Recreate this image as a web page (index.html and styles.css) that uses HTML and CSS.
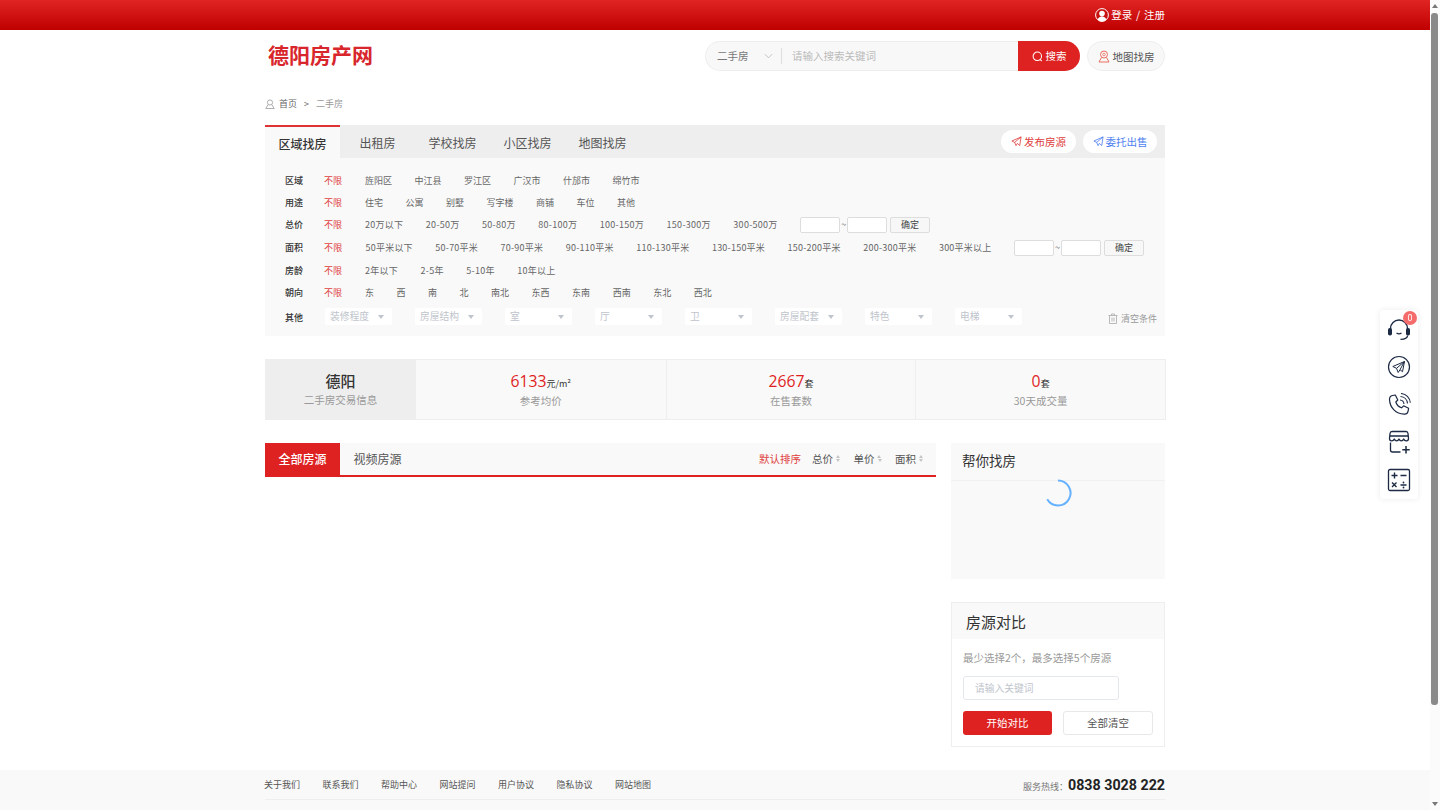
FILE: index.html
```html
<!DOCTYPE html>
<html lang="zh-CN">
<head>
  <meta charset="UTF-8">
  <title>德阳房产网 - 二手房</title>
  <link rel="stylesheet" href="styles.css">
</head>
<body>
  <!-- top bar -->
  <div class="topbar">
    <div class="wrap topbar-in">
      <svg class="user-icon" viewBox="0 0 14 14"><circle cx="7" cy="7" r="6.4" fill="#c8100f" stroke="#fff" stroke-width="1"/><circle cx="7" cy="5.6" r="2.8" fill="#fff"/><path d="M2.6 11.6c.8-2.4 2.4-3.2 4.4-3.2s3.6.8 4.4 3.2A6 6 0 0 1 2.6 11.6z" fill="#fff"/></svg>
      <a class="login">登录 / 注册</a>
    </div>
  </div>

  <!-- logo and search -->
  <div class="wrap header">
    <div class="logo">德阳房产网</div>
    <div class="search">
      <div class="search-type">二手房
        <svg class="chev" viewBox="0 0 10 6"><path d="M1 1l4 4 4-4" fill="none" stroke="#bbb" stroke-width="1"/></svg>
      </div>
      <div class="search-input">请输入搜索关键词</div>
      <div class="search-btn">
        <svg class="ico10" viewBox="0 0 12 12"><circle cx="5.8" cy="5.8" r="4.6" fill="none" stroke="#fff" stroke-width="1.1"/><path d="M8.8 9.2l1.8 1.8" stroke="#fff" stroke-width="1.1"/></svg>
        搜索
      </div>
    </div>
    <div class="map-btn">
      <svg class="pin" viewBox="0 0 12 13"><circle cx="6" cy="4.5" r="3.5" fill="none" stroke="#e9705f" stroke-width="1"/><circle cx="6" cy="4.5" r="1.3" fill="none" stroke="#e9705f" stroke-width=".8"/><path d="M3.5 7.5L1 12h10L8.5 7.5" fill="none" stroke="#e9705f" stroke-width="1"/></svg>
      地图找房
    </div>
  </div>

  <div class="wrap crumb">
    <svg class="crumb-ico" viewBox="0 0 10 10"><circle cx="5" cy="3.5" r="2.6" fill="none" stroke="#999" stroke-width=".8"/><path d="M3 5.8L.8 9.5h8.4L7 5.8" fill="none" stroke="#999" stroke-width=".8"/></svg>
    <a>首页</a><span class="crumb-sep">&gt;</span><span class="crumb-now">二手房</span>
  </div>

  <!-- filter panel -->
  <div class="wrap panel">
    <div class="tabs">
      <a class="tab active">区域找房</a>
      <a class="tab">出租房</a>
      <a class="tab">学校找房</a>
      <a class="tab">小区找房</a>
      <a class="tab">地图找房</a>
      <div class="tab-btns">
        <a class="pill pill-red"><svg class="plane" viewBox="0 0 12 12"><path d="M11 1L1 5.5l3 1.5 1.5 3.5L7 8M11 1L4 7M11 1L9.5 10.5 7 8" fill="none" stroke="currentColor" stroke-width=".9"/></svg>发布房源</a>
        <a class="pill pill-blue"><svg class="plane" viewBox="0 0 12 12"><path d="M11 1L1 5.5l3 1.5 1.5 3.5L7 8M11 1L4 7M11 1L9.5 10.5 7 8" fill="none" stroke="currentColor" stroke-width=".9"/></svg>委托出售</a>
      </div>
    </div>
    <div class="filters">
      <div class="row"><b>区域</b><a class="on">不限</a><a>旌阳区</a><a>中江县</a><a>罗江区</a><a>广汉市</a><a>什邡市</a><a>绵竹市</a></div>
      <div class="row"><b>用途</b><a class="on">不限</a><a>住宅</a><a>公寓</a><a>别墅</a><a>写字楼</a><a>商铺</a><a>车位</a><a>其他</a></div>
      <div class="row row-tall"><b>总价</b><a class="on">不限</a><a>20万以下</a><a>20-50万</a><a>50-80万</a><a>80-100万</a><a>100-150万</a><a>150-300万</a><a>300-500万</a>
        <div class="range"><input><i>~</i><input><button>确定</button></div>
      </div>
      <div class="row row-tall row-area"><b>面积</b><a class="on">不限</a><a>50平米以下</a><a>50-70平米</a><a>70-90平米</a><a>90-110平米</a><a>110-130平米</a><a>130-150平米</a><a>150-200平米</a><a>200-300平米</a><a>300平米以上</a>
        <div class="range"><input><i>~</i><input><button>确定</button></div>
      </div>
      <div class="row row-num"><b>房龄</b><a class="on">不限</a><a>2年以下</a><a>2-5年</a><a>5-10年</a><a>10年以上</a></div>
      <div class="row"><b>朝向</b><a class="on">不限</a><a>东</a><a>西</a><a>南</a><a>北</a><a>南北</a><a>东西</a><a>东南</a><a>西南</a><a>东北</a><a>西北</a></div>
      <div class="row row-other"><b>其他</b>
        <div class="selects">
          <div class="sel">装修程度</div><div class="sel">房屋结构</div><div class="sel">室</div><div class="sel">厅</div><div class="sel">卫</div><div class="sel">房屋配套</div><div class="sel">特色</div><div class="sel">电梯</div>
        </div>
        <a class="clear"><svg class="trash" viewBox="0 0 10 11"><path d="M.5 2.5h9M3.5 2.5V1h3v1.5M1.5 2.5V10.5h7V2.5M4 4.5v4M6 4.5v4" fill="none" stroke="#aaa" stroke-width=".8"/></svg>清空条件</a>
      </div>
    </div>
  </div>

  <!-- stats -->
  <div class="stats">
    <div class="stat-city"><strong>德阳</strong><span>二手房交易信息</span></div>
    <div class="stat"><p><em>6133</em>元/m²</p><span>参考均价</span></div>
    <div class="stat"><p><em>2667</em>套</p><span>在售套数</span></div>
    <div class="stat"><p><em>0</em>套</p><span>30天成交量</span></div>
  </div>

  <!-- list and side column -->
  <div class="wrap content">
    <div class="list">
      <div class="list-head">
        <a class="list-tab active">全部房源</a>
        <a class="list-tab">视频房源</a>
        <div class="sort">
          <a class="on">默认排序</a>
          <a>总价<i class="updown"></i></a>
          <a>单价<i class="updown"></i></a>
          <a>面积<i class="updown"></i></a>
        </div>
      </div>
    </div>
    <div class="side">
      <div class="help">
        <div class="help-title">帮你找房</div>
        <div class="spinner-box"><svg class="spinner" viewBox="0 0 28 28"><path d="M14 1.5A12.5 12.5 0 1 1 3.2 20.3" fill="none" stroke="#66b1ff" stroke-width="2"/></svg></div>
      </div>
      <div class="compare">
        <div class="compare-title">房源对比</div>
        <div class="compare-body">
          <p>最少选择2个，最多选择5个房源</p>
          <div class="compare-input">请输入关键词</div>
          <div class="compare-btns"><a class="btn-red">开始对比</a><a class="btn-white">全部清空</a></div>
        </div>
      </div>
    </div>
  </div>

  <!-- footer -->
  <div class="footer">
    <div class="wrap">
      <div class="foot-top">
        <div class="foot-links"><a>关于我们</a><a>联系我们</a><a>帮助中心</a><a>网站提问</a><a>用户协议</a><a>隐私协议</a><a>网站地图</a></div>
        <div class="hotline">服务热线：<b>0838 3028 222</b></div>
      </div>
    </div>
  </div>

  <!-- floating tools -->
  <div class="rail">
    <div class="rail-item">
      <span class="badge">0</span>
      <svg viewBox="0 0 24 24"><path d="M3.5 13V10.5a8.5 8.5 0 0 1 17 0V13" fill="none" stroke="#1d2a44" stroke-width="1.4"/><rect x="1" y="10" width="4" height="7.5" rx="1.8" fill="#1d2a44"/><rect x="19" y="10" width="4" height="7.5" rx="1.8" fill="#1d2a44"/><path d="M9.5 15c1.5 1 3.5 1 5 0M20.5 17.5c0 2.5-3.500 3.800-7 3.800" fill="none" stroke="#1d2a44" stroke-width="1.3"/></svg>
    </div>
    <div class="rail-item">
      <svg viewBox="0 0 24 24"><circle cx="12" cy="12" r="10.5" fill="none" stroke="#1d2a44" stroke-width="1.2"/><path d="M17.5 6.5L5.8 11.5l3.7 1.8 1.7 4.2 1.8-2.800zM17.5 6.5L9.5 13.3M17.5 6.5l-2 10.2-2.5-2" fill="none" stroke="#1d2a44" stroke-width="1" stroke-linejoin="round"/></svg>
    </div>
    <div class="rail-item">
      <svg viewBox="0 0 24 24"><path d="M5.5 2.5L8.3 2l2.500 5-2 2c.8 2.500 3.300 5 5.800 5.800l2-2 5 2.500-.5 2.800c-.4 2-2.200 3.200-4.100 3C9 21 3 14.800 2.500 6.600c-.1-2 1-3.700 3-4.100z" fill="none" stroke="#1d2a44" stroke-width="1.2" stroke-linejoin="round"/><path d="M13 7c2.200.2 3.800 1.800 4 4M13.500 3.500c3.800.3 6.700 3.200 7 7M14 .5c5 .3 9 4.200 9.300 9.300" fill="none" stroke="#1d2a44" stroke-width="1.1"/></svg>
    </div>
    <div class="rail-item">
      <svg viewBox="0 0 24 24"><path d="M2.5 8.5L3 3.500C3.100 2.500 3.800 1.500 5 1.500h14c1.200 0 1.900 1 2 2l.5 5M2.700 6h18.600M2.500 8.500c0 3 3.800 3 4.800.5 1 2.500 3.700 2.500 4.700 0 1 2.500 3.700 2.500 4.700 0 1 2.500 4.800 2.500 4.800-.5" fill="none" stroke="#1d2a44" stroke-width="1.3" stroke-linejoin="round"/><path d="M3.500 12.500V20c0 1.200.8 2 2 2h8" fill="none" stroke="#1d2a44" stroke-width="1.3"/><path d="M19 16v7.500M15.300 19.800h7.400" stroke="#1d2a44" stroke-width="1.5"/></svg>
    </div>
    <div class="rail-item">
      <svg viewBox="0 0 24 24"><rect x="1.5" y="1.5" width="21" height="21" rx="1.500" fill="none" stroke="#1d2a44" stroke-width="1.3"/><path d="M7.500 4.500v6M4.500 7.500h6M13.500 7.500h6M5 14.500l4.500 4.500M9.500 14.500L5 19M13.500 17h6" stroke="#1d2a44" stroke-width="1.4"/><circle cx="16.5" cy="14.5" r=".9" fill="#1d2a44"/><circle cx="16.5" cy="19.5" r=".9" fill="#1d2a44"/></svg>
    </div>
  </div>

  <!-- window scrollbar as shown in the screenshot -->
  <div class="scrollbar">
    <span class="sb-up"></span>
    <span class="sb-thumb"></span>
    <span class="sb-down"></span>
  </div>
</body>
</html>
```

FILE: styles.css
```css
html {
  overflow: hidden;
}
body {
  margin: 0;
  width: 1430px;
  height: 810px;
  overflow: hidden;
  font-family: "Noto Sans CJK SC", "Liberation Sans", sans-serif;
  font-size: 9px;
  color: #333;
  background: #fff;
}
a {
  color: inherit;
  text-decoration: none;
}
.wrap {
  width: 900px;
  margin: 0 auto;
}

/* top bar */
.topbar {
  height: 30px;
  background: linear-gradient(to bottom, #e02424, #c00000);
}
.topbar-in {
  display: flex;
  justify-content: flex-end;
  align-items: center;
  height: 30px;
}
.user-icon {
  width: 14px;
  height: 14px;
  margin-right: 2px;
}
.login {
  padding-bottom: 2px;
  color: #fff;
  font-size: 10.5px;
  word-spacing: 1.5px;
}

/* header */
.header {
  display: flex;
  align-items: center;
  height: 30px;
  padding-top: 11px;
}
.logo {
  width: 437px;
  padding: 0 0 4px 3px;
  color: #d8262c;
  font-size: 21px;
  font-weight: 700;
  line-height: 30px;
}
.search {
  display: flex;
  width: 375px;
  height: 30px;
  box-sizing: border-box;
  background: #f8f8f8;
  border: 1px solid #eee;
  border-right: 0;
  border-radius: 15px;
  font-size: 10.5px;
  line-height: 28px;
}
.search-type {
  display: flex;
  align-items: center;
  width: 75px;
  padding-left: 11px;
  box-sizing: border-box;
  color: #777;
  white-space: nowrap;
}
.chev {
  width: 9px;
  height: 6px;
  margin-left: 15px;
}
.search-input {
  flex: 1;
  margin: 6px 0;
  padding-left: 10px;
  border-left: 1px solid #ddd;
  line-height: 16px;
  color: #bbb;
}
.search-btn {
  display: flex;
  align-items: center;
  justify-content: center;
  gap: 3px;
  width: 62px;
  margin: -1px 0;
  background: #de2222;
  border-radius: 0 15px 15px 0;
  color: #fff;
}
.ico10 {
  width: 11px;
  height: 11px;
}
.map-btn {
  display: flex;
  align-items: center;
  justify-content: center;
  gap: 3px;
  width: 78px;
  height: 30px;
  margin-left: 7px;
  box-sizing: border-box;
  background: #f8f8f8;
  border: 1px solid #eee;
  border-radius: 15px;
  font-size: 10.5px;
  color: #555;
}
.pin {
  width: 12px;
  height: 13px;
}

/* breadcrumb */
.crumb {
  display: flex;
  align-items: center;
  height: 14px;
  padding-top: 26px;
  color: #666;
  line-height: 14px;
}
.crumb-ico {
  width: 10px;
  height: 10px;
  margin-right: 4px;
}
.crumb-sep {
  margin: 0 7px;
}
.crumb-now {
  color: #999;
}

/* filter panel */
.panel {
  margin-top: 14px;
}
.tabs {
  display: flex;
  height: 33px;
  background: #eee;
  font-size: 12px;
  color: #555;
}
.tab {
  width: 75px;
  text-align: center;
  line-height: 36px;
}
.tab.active {
  box-sizing: border-box;
  background: #f9f9f9;
  border-top: 2px solid #de3333;
  color: #333;
  font-weight: 500;
  line-height: 34px;
}
.tab-btns {
  display: flex;
  gap: 7px;
  align-items: center;
  margin-left: auto;
  padding-right: 8px;
}
.pill {
  display: flex;
  align-items: center;
  justify-content: center;
  gap: 2px;
  width: 75px;
  height: 23px;
  background: #fff;
  border-radius: 12px;
  font-size: 10.5px;
}
.pill-red {
  color: #e04040;
}
.pill-blue {
  width: 74px;
  color: #4f7ff0;
}
.plane {
  width: 11px;
  height: 11px;
}
.filters {
  height: 167px;
  padding: 11px 8px 0 20px;
  background: #f9f9f9;
}
.row {
  display: flex;
  align-items: center;
  gap: 22.5px;
  height: 22px;
  color: #666;
  white-space: nowrap;
}
.row-tall {
  height: 23px;
}
.row-tall a,
.row-num a {
  letter-spacing: .27px;
}
.row-tall.row-area a {
  letter-spacing: .23px;
}
.row b {
  width: 16.5px;
  font-weight: 500;
  color: #333;
}
.row .on {
  margin-right: .5px;
  color: #e04040;
  letter-spacing: 0;
}
.range {
  display: flex;
  align-items: center;
}
.range input {
  width: 40px;
  height: 16px;
  padding: 0;
  box-sizing: border-box;
  background: #fff;
  border: 1px solid #ddd;
  border-radius: 2px;
}
.range i {
  width: 7px;
  text-align: center;
  font-style: normal;
}
.range button {
  width: 40px;
  height: 16px;
  margin-left: 3px;
  padding: 0;
  background: #f7f7f7;
  border: 1px solid #ddd;
  border-radius: 2px;
  font-family: inherit;
  font-size: 9px;
  color: #444;
}
.row-other {
  height: 25px;
  margin-top: 1px;
}
.row-other b {
  padding-top: 1px;
}
.selects {
  display: flex;
  gap: 23px;
  margin-left: 1px;
}
.sel {
  width: 67px;
  height: 17px;
  padding-left: 5px;
  box-sizing: border-box;
  background: #fff;
  border-radius: 2px;
  font-size: 9.75px;
  line-height: 17px;
  color: #c0c4cc;
  position: relative;
}
.sel::after {
  content: "";
  position: absolute;
  right: 8px;
  top: 7px;
  border: 3.5px solid transparent;
  border-bottom: 0;
  border-top: 4px solid #c0c4cc;
}
.clear {
  display: flex;
  align-items: center;
  gap: 3px;
  margin-left: auto;
  padding-top: 4px;
  color: #999;
}
.trash {
  width: 10px;
  height: 11px;
}

/* stats */
.stats {
  display: flex;
  width: 901px;
  height: 61px;
  margin: 23px 0 0 265px;
  box-sizing: border-box;
  background: #f9f9f9;
  border: 1px solid #eee;
}
.stat-city {
  display: flex;
  flex-direction: column;
  align-items: center;
  justify-content: center;
  width: 151px;
  margin-left: -1px;
  padding-bottom: 2px;
  box-sizing: border-box;
  background: #eee;
}
.stat-city strong {
  font-size: 15px;
  font-weight: 500;
  line-height: 22px;
}
.stat-city span,
.stat span {
  font-size: 10.5px;
  line-height: 16px;
  color: #999;
}
.stat {
  display: flex;
  flex-direction: column;
  align-items: center;
  justify-content: center;
  width: 250px;
  box-sizing: border-box;
  border-left: 1px solid #eee;
}
.stat:nth-child(2) {
  border-left: 0;
}
.stat p {
  margin: 0;
  font-size: 9px;
  line-height: 20px;
}
.stat span {
  line-height: 14px;
}
.stat em {
  font-family: "Open Sans", sans-serif;
  font-size: 15.75px;
  font-style: normal;
  color: #e01f1f;
}

/* list and side */
.content {
  display: flex;
  justify-content: space-between;
  margin-top: 23px;
}
.list {
  width: 671px;
}
.list-head {
  display: flex;
  height: 34px;
  background: #f9f9f9;
  border-bottom: 2px solid #de2222;
  box-sizing: border-box;
  font-size: 12px;
  color: #555;
}
.list-tab {
  width: 75px;
  text-align: center;
  line-height: 32px;
  margin-right: -1px;
}
.list-tab.active {
  height: 34px;
  background: #de2222;
  color: #fff;
  font-weight: 500;
  margin-right: 0;
}
.sort {
  display: flex;
  gap: 13.5px;
  margin-left: auto;
  padding-right: 13px;
  font-size: 10.5px;
  line-height: 32px;
}
.sort .on {
  margin-right: -2.5px;
  color: #e04040;
}
.updown {
  display: inline-block;
  width: 0;
  margin-left: 3px;
  vertical-align: 1px;
  border: 2.5px solid transparent;
  border-top: 3px solid #c4c4c4;
  border-bottom: 0;
  position: relative;
}
.updown::before {
  content: "";
  position: absolute;
  left: -2.5px;
  top: -7px;
  border: 2.5px solid transparent;
  border-bottom: 3px solid #c4c4c4;
  border-top: 0;
}
.side {
  width: 214px;
}
.help {
  height: 136px;
  background: #f9f9f9;
}
.help-title {
  height: 37px;
  padding-left: 11px;
  border-bottom: 1px solid #f1f1f1;
  font-size: 13.5px;
  line-height: 35px;
}
.spinner-box {
  display: flex;
  justify-content: center;
}
.spinner {
  width: 28px;
  height: 28px;
  margin-top: -2px;
}
.compare {
  height: 145px;
  margin-top: 23px;
  box-sizing: border-box;
  border: 1px solid #eee;
}
.compare-title {
  height: 36px;
  padding-left: 14px;
  background: #f9f9f9;
  font-size: 15px;
  line-height: 38px;
}
.compare-body {
  padding: 0 11px;
}
.compare-body p {
  margin: 11px 0 0;
  font-size: 10.5px;
  line-height: 15px;
  color: #999;
}
.compare-input {
  width: 156px;
  height: 24px;
  margin-top: 11px;
  padding-left: 11px;
  box-sizing: border-box;
  border: 1px solid #e4e7ed;
  border-radius: 3px;
  font-size: 9.75px;
  line-height: 22px;
  color: #c0c4cc;
}
.compare-btns {
  display: flex;
  gap: 11px;
  margin-top: 11px;
  font-size: 10.5px;
  line-height: 24px;
  text-align: center;
}
.btn-red {
  width: 89px;
  height: 24px;
  background: #de2222;
  border-radius: 3px;
  color: #fff;
}
.btn-white {
  width: 90px;
  height: 24px;
  box-sizing: border-box;
  border: 1px solid #e8e8e8;
  border-radius: 3px;
  line-height: 22px;
  color: #555;
}

/* footer */
.footer {
  height: 40px;
  margin-top: 23px;
  background: #f9f9f9;
}
.foot-top {
  display: flex;
  justify-content: space-between;
  align-items: center;
  height: 29px;
  border-bottom: 1px solid #eee;
}
.foot-links {
  display: flex;
  gap: 22.5px;
  margin-left: -1px;
  color: #555;
}
.hotline {
  color: #777;
  font-size: 9px;
}
.hotline b {
  font-family: Roboto, sans-serif;
  font-size: 14.25px;
  font-weight: 700;
  color: #222;
}

/* floating tools */
.rail {
  position: fixed;
  left: 1380px;
  top: 310px;
  width: 38px;
  height: 189px;
  padding-top: 1px;
  box-sizing: border-box;
  background: #fff;
  border-radius: 4px;
  box-shadow: 0 0 6px rgba(0, 0, 0, .08);
}
.rail-item {
  display: flex;
  align-items: center;
  justify-content: center;
  height: 37.5px;
  position: relative;
}
.rail-item svg {
  width: 24px;
  height: 24px;
}
.badge {
  position: absolute;
  top: 0;
  right: 1px;
  width: 14px;
  height: 14px;
  background: #f56c6c;
  border-radius: 50%;
  color: #fff;
  font-size: 9px;
  line-height: 14px;
  text-align: center;
}

/* scrollbar */
.scrollbar {
  position: fixed;
  top: 0;
  right: 0;
  width: 10px;
  height: 810px;
  background: #fbfbfb;
}
.sb-up,
.sb-down {
  position: absolute;
  left: 2px;
  border: 3px solid transparent;
}
.sb-up {
  top: 4px;
  border-top: 0;
  border-bottom: 4px solid #777;
}
.sb-down {
  bottom: 4px;
  border-bottom: 0;
  border-top: 4px solid #777;
}
.sb-thumb {
  position: absolute;
  left: 1px;
  top: 13px;
  width: 7px;
  height: 692px;
  background: #8a8a8a;
  border-radius: 3px;
}
```
